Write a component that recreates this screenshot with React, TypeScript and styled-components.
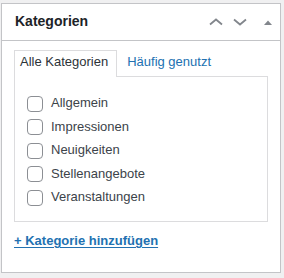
import React from 'react';
import styled, { createGlobalStyle } from 'styled-components';

const GlobalStyle = createGlobalStyle`
  html, body {
    margin: 0;
    padding: 0;
    background: #f0f0f1;
  }
  body {
    font-family: "Liberation Sans", Arial, sans-serif;
    font-size: 13px;
    color: #3c434a;
  }
`;

const Page = styled.div`
  padding: 3px 0 0 1px;
`;

const Postbox = styled.div`
  width: 280px;
  box-sizing: border-box;
  background: #fff;
  border: 1px solid #c3c4c7;
`;

const Header = styled.div`
  height: 36px;
  display: flex;
  align-items: center;
  border-bottom: 1px solid #c3c4c7;
  padding-left: 13px;
`;

const Title = styled.h2`
  flex: 1;
  margin: 0;
  font-size: 14px;
  font-weight: 600;
  line-height: 1.4;
  color: #1d2327;
`;

const HandleButton = styled.button<{ $gap?: number }>`
  width: 24px;
  height: 36px;
  padding: 0;
  margin-left: ${(p) => p.$gap ?? 0}px;
  border: 0;
  background: none;
  display: flex;
  align-items: center;
  justify-content: center;
  color: #82868c;
`;

const Inside = styled.div`
  padding: 9px 12px 22px;
`;

const Tabs = styled.ul`
  list-style: none;
  margin: 0 0 -1px;
  padding: 0;
  display: flex;
  gap: 4px;
  position: relative;
`;

const Tab = styled.li<{ $active?: boolean }>`
  padding: 2px 8px 6px 5px;
  line-height: 18px;
  border: 1px solid ${(p) => (p.$active ? '#dcdcde' : 'transparent')};
  border-bottom: 0;
  background: ${(p) => (p.$active ? '#fff' : 'transparent')};
  color: ${(p) => (p.$active ? '#2c3338' : '#2271b1')};
`;

const TabPanel = styled.div`
  border: 1px solid #dcdcde;
  padding: 0 12px;
`;

const Checklist = styled.ul`
  list-style: none;
  margin: 14px 0 12.5px;
  padding: 0;
`;

const Item = styled.li`
  height: 23.5px;
  display: flex;
  align-items: center;
  gap: 8px;
  color: #3c434a;
`;

const Box = styled.span`
  width: 16px;
  height: 16px;
  box-sizing: border-box;
  margin-top: 2px;
  border: 1px solid #8c8f94;
  border-radius: 4px;
  background: #fff;
  flex: none;
`;

const AddLink = styled.a`
  display: block;
  margin-top: 9px;
  line-height: 19px;
  font-weight: 600;
  color: #2271b1;
  text-decoration: underline;
  text-underline-offset: 2px;
`;

const Chevron = ({ down }: { down?: boolean }) => (
  <svg width="14" height="8" viewBox="0 0 14 8">
    <polyline
      points={down ? '1,1.5 7,6.5 13,1.5' : '1,6.5 7,1.5 13,6.5'}
      fill="none"
      stroke="currentColor"
      strokeWidth="1.8"
    />
  </svg>
);

const categories = ['Allgemein', 'Impressionen', 'Neuigkeiten', 'Stellenangebote', 'Veranstaltungen'];

const App: React.FC = () => (
  <>
    <GlobalStyle />
    <Page>
      <Postbox>
        <Header>
          <Title>Kategorien</Title>
          <HandleButton>
            <Chevron />
          </HandleButton>
          <HandleButton>
            <Chevron down />
          </HandleButton>
          <HandleButton $gap={4}>
            <svg width="8" height="5" viewBox="0 0 8 5">
              <polygon points="0,5 4,0.5 8,5" fill="currentColor" />
            </svg>
          </HandleButton>
        </Header>
        <Inside>
          <Tabs>
            <Tab $active>Alle Kategorien</Tab>
            <Tab>Häufig genutzt</Tab>
          </Tabs>
          <TabPanel>
            <Checklist>
              {categories.map((c) => (
                <Item key={c}>
                  <Box />
                  {c}
                </Item>
              ))}
            </Checklist>
          </TabPanel>
          <AddLink href="#">+ Kategorie hinzufügen</AddLink>
        </Inside>
      </Postbox>
    </Page>
  </>
);

export default App;
